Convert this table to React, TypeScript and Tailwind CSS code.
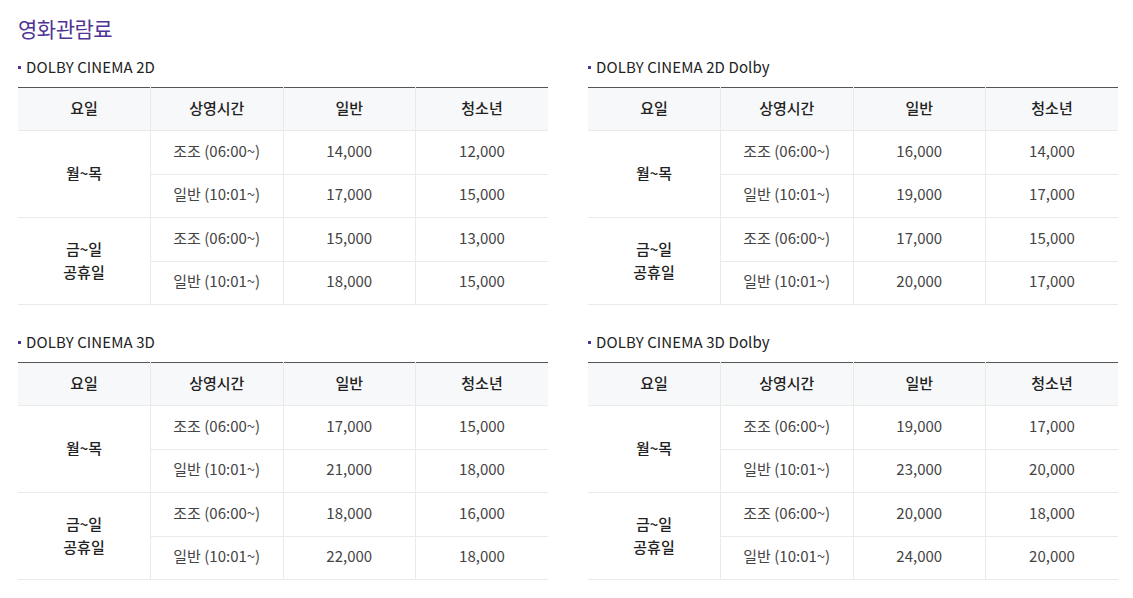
const SECTIONS = [
  {
    title: "DOLBY CINEMA 2D",
    prices: [
      ["14,000", "12,000"],
      ["17,000", "15,000"],
      ["15,000", "13,000"],
      ["18,000", "15,000"],
    ],
  },
  {
    title: "DOLBY CINEMA 2D Dolby",
    prices: [
      ["16,000", "14,000"],
      ["19,000", "17,000"],
      ["17,000", "15,000"],
      ["20,000", "17,000"],
    ],
  },
  {
    title: "DOLBY CINEMA 3D",
    prices: [
      ["17,000", "15,000"],
      ["21,000", "18,000"],
      ["18,000", "16,000"],
      ["22,000", "18,000"],
    ],
  },
  {
    title: "DOLBY CINEMA 3D Dolby",
    prices: [
      ["19,000", "17,000"],
      ["23,000", "20,000"],
      ["20,000", "18,000"],
      ["24,000", "20,000"],
    ],
  },
];

const TIMES = ["조조 (06:00~)", "일반 (10:01~)"];

export default function App() {
  return (
    <div
      className="min-h-[598px] bg-white pl-[18px] pr-[15px] pt-[12px] text-[#444]"
      style={{ fontFamily: '"Noto Sans CJK KR", "Noto Sans", sans-serif' }}
    >
      <h2 className="text-[21px] leading-[32px] tracking-[-0.5px] text-[#503396]">영화관람료</h2>
      <div className="mt-[12px] grid grid-cols-2 gap-x-[40px] gap-y-[26px]">
        {SECTIONS.map((s) => (
          <PriceTable key={s.title} title={s.title} prices={s.prices} />
        ))}
      </div>
    </div>
  );
}

function PriceTable({ title, prices }: { title: string; prices: string[][] }) {
  return (
    <section>
      <h3 className="flex items-center gap-[5px] text-[15px] leading-[22px] tracking-[0.1px] text-[#222]">
        <span className="inline-block h-[3px] w-[3px] bg-[#503396]" />
        {title}
      </h3>
      <table className="mt-[9px] w-full table-fixed border-collapse border-t border-t-[#555] text-center text-[15px]">
        <thead>
          <tr className="h-[43px] bg-[#f7f8f9] text-[#222]">
            {["요일", "상영시간", "일반", "청소년"].map((h, i) => (
              <th
                key={h}
                className={
                  "border-b border-[#eaeaea] pb-[1px] font-medium " + (i < 3 ? "border-r" : "")
                }
              >
                {h}
              </th>
            ))}
          </tr>
        </thead>
        <tbody>
          {prices.map((p, i) => (
            <tr key={i} className="h-[43.5px]">
              {i % 2 === 0 && (
                <td rowSpan={2} className="border-b border-r border-[#eaeaea] pb-[3px] font-medium leading-[23px] text-[#222]">
                  {i === 0 ? (
                    "월~목"
                  ) : (
                    <>
                      금~일
                      <br />
                      공휴일
                    </>
                  )}
                </td>
              )}
              <td className="border-b border-r border-[#eaeaea] pb-[3px]">{TIMES[i % 2]}</td>
              <td className="border-b border-r border-[#eaeaea] pb-[3px]">{p[0]}</td>
              <td className="border-b border-[#eaeaea] pb-[3px]">{p[1]}</td>
            </tr>
          ))}
        </tbody>
      </table>
    </section>
  );
}
